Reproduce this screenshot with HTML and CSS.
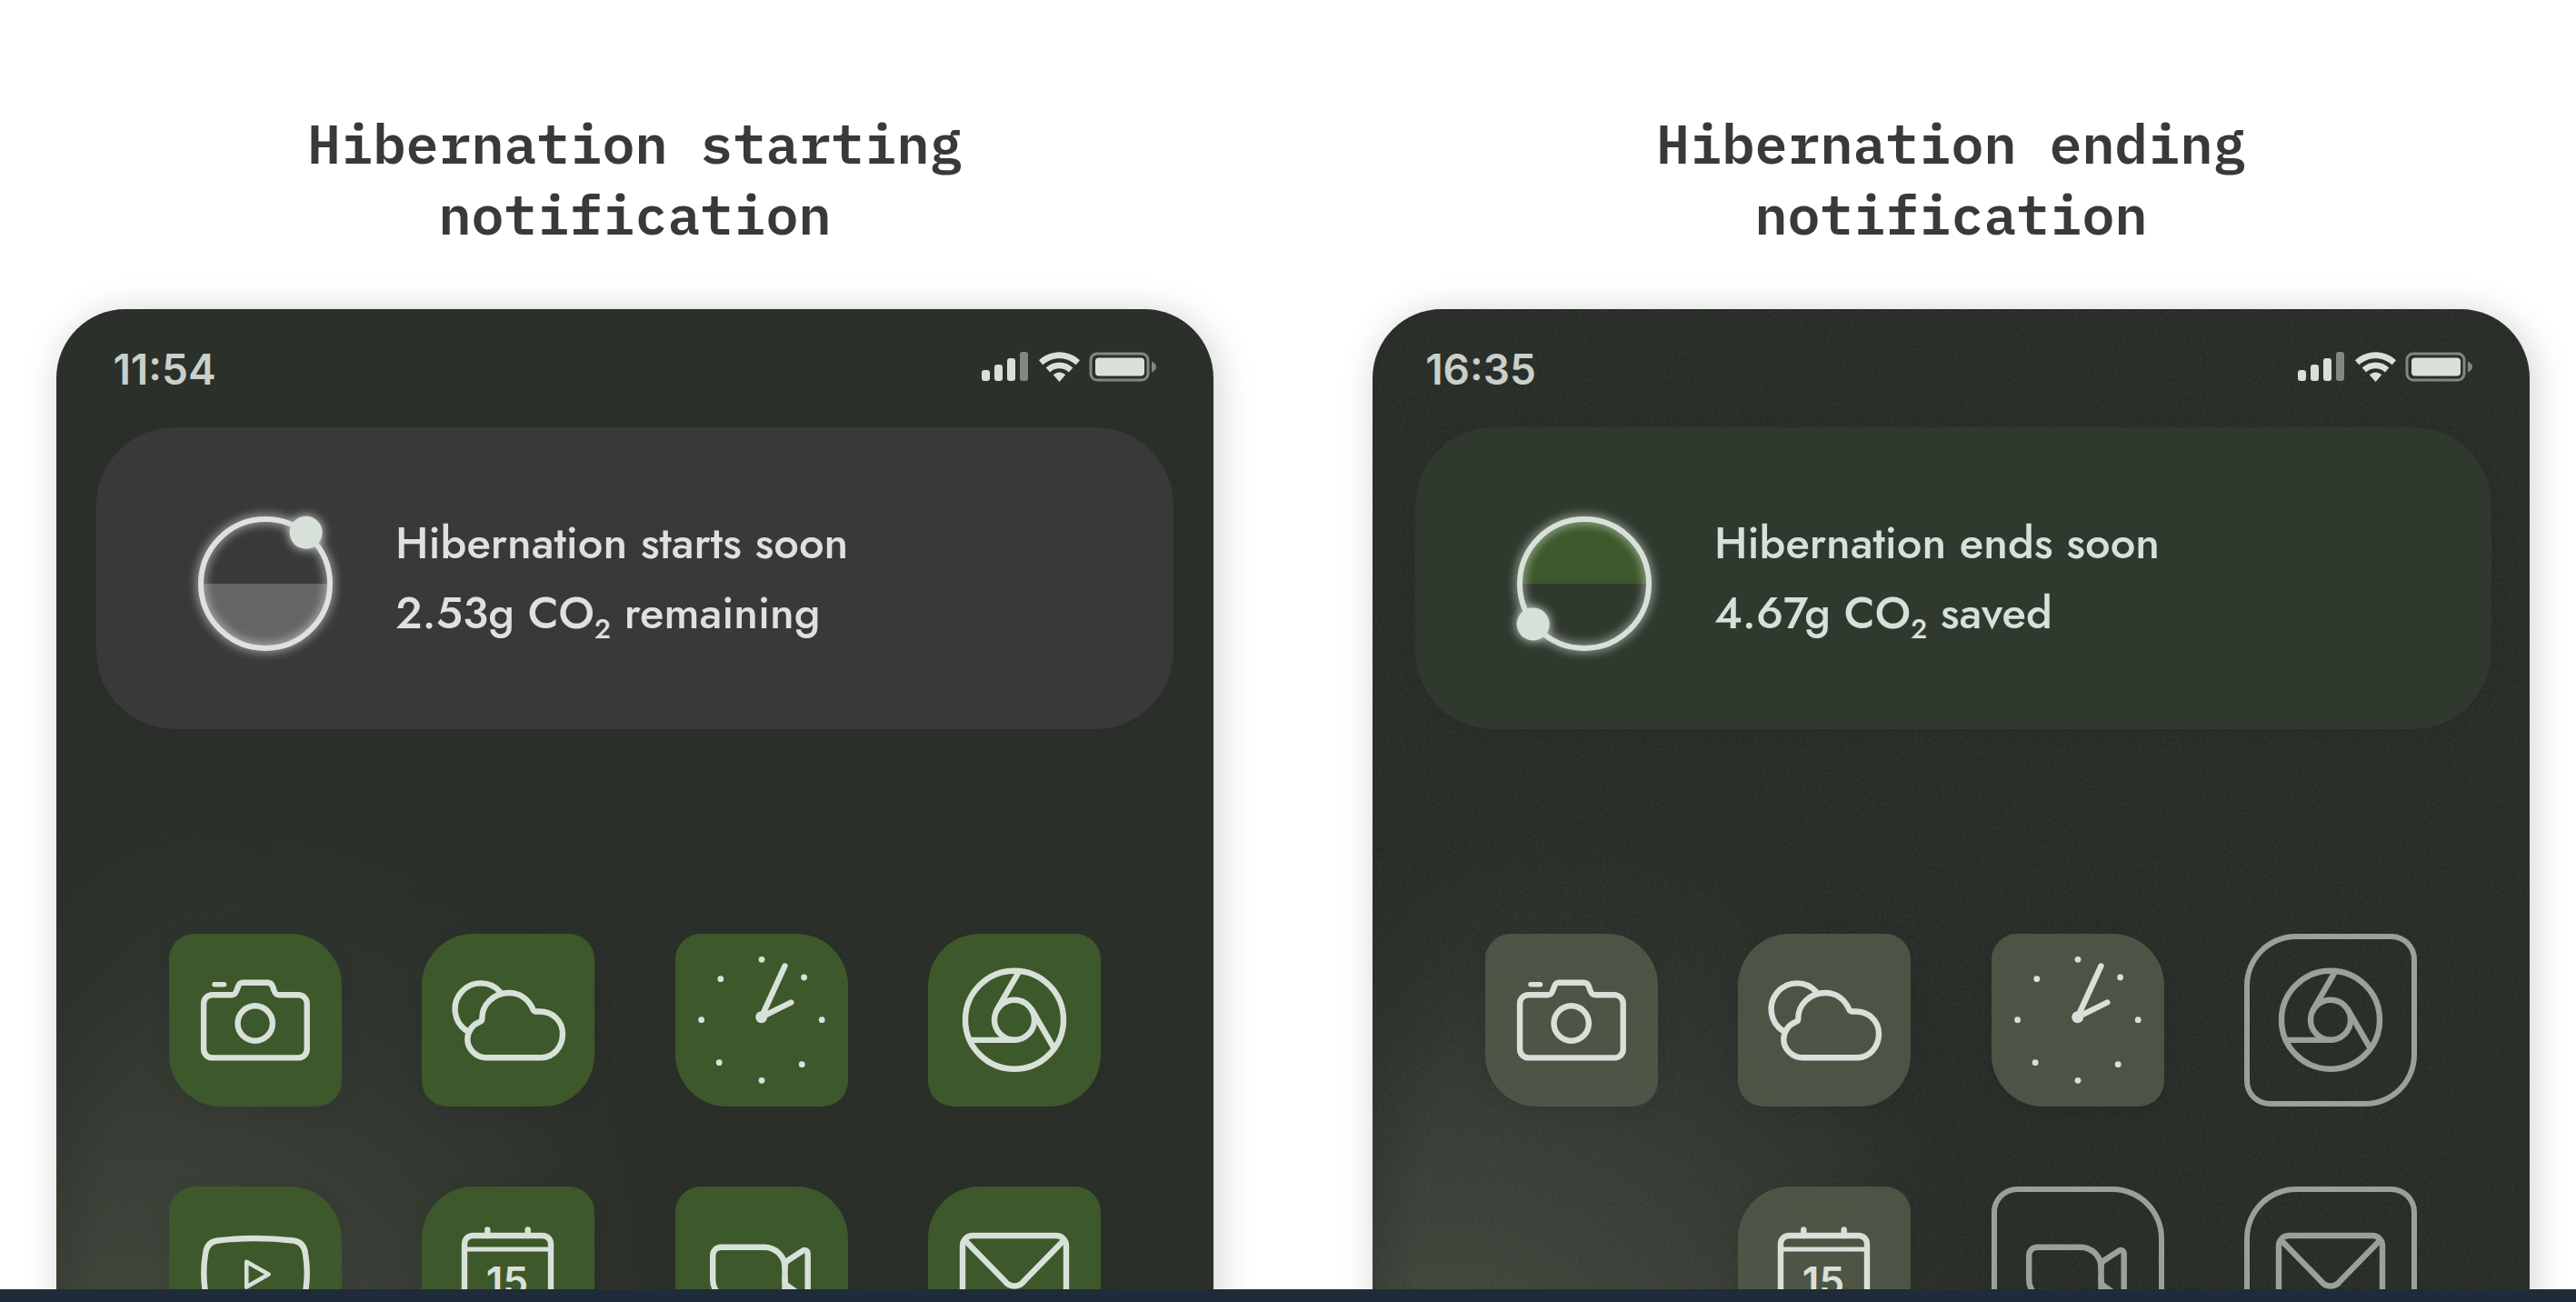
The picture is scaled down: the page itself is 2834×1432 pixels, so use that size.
FILE: index.html
```html
<!DOCTYPE html>
<html lang="en">
<head>
<meta charset="utf-8">
<meta name="viewport" content="width=device-width, initial-scale=1">
<title>Hibernation notifications</title>
<link rel="stylesheet" href="styles.css">
</head>
<body>
<svg class="sprite" aria-hidden="true">
  <symbol id="status" viewBox="0 0 192 34">
    <rect x="0" y="21" width="9" height="12" rx="3"/>
    <rect x="14" y="15" width="9" height="18" rx="3"/>
    <rect x="28" y="8" width="9" height="25" rx="3"/>
    <rect x="42" y="1" width="9" height="32" rx="3" opacity=".5"/>
    <path d="M85.500 1.300C94.300 1.300 102.300 4.800 108 10.300L103.700 15.300C99 10.900 92.500 8.200 85.500 8.200S72 10.900 67.300 15.300L63 10.300C68.700 4.800 76.700 1.300 85.500 1.300Z"/>
    <path d="M85.500 12.500C91.200 12.500 96.400 14.700 100.300 18.400L95.800 23.400C93 20.800 89.500 19.300 85.500 19.300S78 20.800 75.200 23.400L70.700 18.400C74.600 14.700 79.800 12.500 85.500 12.500Z"/>
    <path d="M85.500 23.400C88 23.400 90.400 24.500 92.200 26.200L85.500 34 78.800 26.200C80.600 24.500 83 23.400 85.500 23.400Z"/>
    <rect x="120" y="3" width="63" height="29" rx="7" fill="none" stroke="currentColor" stroke-width="3" opacity=".5"/>
    <rect x="125" y="7.500" width="54" height="20" rx="4"/>
    <path d="M187 11.500C190.400 13 192 15.200 192 17.500S190.400 22 187 23.500Z" opacity=".5"/>
  </symbol>
  <symbol id="camera" viewBox="0 0 190 190">
    <path d="M47.500 67.300H68.500C72 67.300 73 66 74.300 62.500L76 58C77.200 55 78 53.800 81 53.800H108.500C111.500 53.800 112.800 55 114 58L115.500 62.500C116.800 66 118 67.300 121.500 67.300H142.300a9.400 9.400 0 0 1 9.400 9.400V127a9.400 9.400 0 0 1-9.400 9.400H47.500a9.400 9.400 0 0 1-9.400-9.400V76.700a9.400 9.400 0 0 1 9.400-9.400Z"/>
    <circle cx="94.700" cy="98.500" r="19.200"/>
    <path d="M50 55.700H60.500" stroke-width="5.500"/>
  </symbol>
  <symbol id="weather" viewBox="0 0 190 190">
    <path d="M86.500 64A28.500 28.500 0 1 0 50 107" stroke-linecap="butt"/>
    <path d="M71 136.300H131.500C145 136.300 155 124 155 110C155 96 144 85.500 130 85.500H125.500C123.800 85.500 123.300 85 122.500 83.500C117.500 72 108 65 96 65C79 65 66 78 66.300 93.500C66.300 95.500 66 96 63.500 97C55.500 100 50.300 108 50.300 116C50.300 127 60 136.300 71 136.300Z"/>
  </symbol>
  <symbol id="clock" viewBox="0 0 190 190">
    <path d="M94.700 91.700L120.400 35.500M94.700 91.700L127.300 75.500"/>
    <g fill="currentColor" stroke="none">
      <circle cx="94.700" cy="91.700" r="6.500"/>
      <circle cx="95" cy="28.300" r="3.400"/><circle cx="141.600" cy="48" r="3.400"/>
      <circle cx="161.200" cy="94.700" r="3.400"/><circle cx="139.200" cy="143.700" r="3.400"/>
      <circle cx="95" cy="161.300" r="3.400"/><circle cx="48.200" cy="141.700" r="3.400"/>
      <circle cx="28.600" cy="94.700" r="3.400"/><circle cx="49.800" cy="49.700" r="3.400"/>
    </g>
  </symbol>
  <symbol id="browser" viewBox="0 0 190 190">
    <circle cx="95" cy="94.700" r="54"/>
    <circle cx="95" cy="94.700" r="22"/>
    <path d="M95 116.900H46"/>
    <path d="M95 116.900H46" transform="rotate(120 95 94.700)"/>
    <path d="M95 116.900H46" transform="rotate(240 95 94.700)"/>
  </symbol>
  <symbol id="player" viewBox="0 0 190 190">
    <path d="M53 59.500Q95 54.500 137 59.500C145 60.500 149 66 150 74Q153.500 95 150 116C149 124 145 130 137 131Q95 135 53 131C45 130 41 124 40 116Q36.500 95 40 74C41 66 45 60.500 53 59.500Z"/>
    <path d="M85.200 82.700L109.500 96.600L85.200 110.500Z" stroke-width="4.600"/>
  </symbol>
  <symbol id="calendar" viewBox="0 0 190 190">
    <rect x="47" y="54" width="95" height="84" rx="9"/>
    <path d="M47 69H142" stroke-width="5"/>
    <path d="M72.300 54V47.500M116.700 54V47.500"/>
  </symbol>
  <symbol id="video" viewBox="0 0 190 190">
    <path d="M50.200 66.700H98A22.500 22.500 0 0 1 120.500 89.200V115.700a9 9 0 0 1-9 9H63.700A22.500 22.500 0 0 1 41.200 102.200V75.700a9 9 0 0 1 9-9Z"/>
    <path d="M120.500 90c0-5 .5-6.500 3-8.500L139 71.300c3.500-2.500 6.700-1 6.700 3V117c0 4-3 5.500-6.700 3L123.500 109.500c-2.500-2-3-3.500-3-8.500"/>
  </symbol>
  <symbol id="mail" viewBox="0 0 190 190">
    <rect x="38" y="54" width="114" height="84" rx="11"/>
    <path d="M41.500 60L84 103.500C90 111.500 100 111.500 106 103.500L148.500 60"/>
  </symbol>
</svg>

<main class="stage">
  <section class="demo">
    <h2 class="demo-title">Hibernation starting notification</h2>
    <div class="phone">
      <header class="status-bar">
        <time class="clock-time">11:54</time>
        <svg class="status-icons" aria-hidden="true"><use href="#status"/></svg>
      </header>
      <article class="notice notice-start">
        <svg class="dial" viewBox="0 0 148 148" aria-hidden="true">
          <path class="dial-fill" d="M3 74A71 71 0 0 0 145 74Z"/>
          <circle class="dial-ring" cx="74" cy="74" r="71"/>
          <circle class="dial-knob" cx="118.600" cy="17.700" r="18"/>
        </svg>
        <p class="notice-text">Hibernation starts soon<br>2.53g CO<sub>2</sub> remaining</p>
      </article>
      <ul class="apps">
        <li><button class="app" aria-label="Camera"><svg><use href="#camera"/></svg></button></li>
        <li><button class="app app-flip" aria-label="Weather"><svg><use href="#weather"/></svg></button></li>
        <li><button class="app" aria-label="Clock"><svg><use href="#clock"/></svg></button></li>
        <li><button class="app app-flip" aria-label="Browser"><svg><use href="#browser"/></svg></button></li>
        <li><button class="app" aria-label="Videos"><svg><use href="#player"/></svg></button></li>
        <li><button class="app app-flip" aria-label="Calendar"><svg><use href="#calendar"/><text class="date" x="94" y="120" text-anchor="middle">15</text></svg></button></li>
        <li><button class="app" aria-label="Video call"><svg><use href="#video"/></svg></button></li>
        <li><button class="app app-flip" aria-label="Mail"><svg><use href="#mail"/></svg></button></li>
      </ul>
    </div>
  </section>

  <section class="demo">
    <h2 class="demo-title">Hibernation ending notification</h2>
    <div class="phone phone-asleep">
      <svg class="grain" aria-hidden="true">
        <filter id="noise" x="0" y="0" width="100%" height="100%">
          <feTurbulence type="fractalNoise" baseFrequency=".3" numOctaves="2" seed="4"/>
          <feColorMatrix values="0 0 0 0 .5  0 0 0 0 .5  0 0 0 0 .5  1.600 0 0 0 -.5"/>
        </filter>
        <rect width="100%" height="100%" filter="url(#noise)"/>
      </svg>
      <header class="status-bar">
        <time class="clock-time">16:35</time>
        <svg class="status-icons" aria-hidden="true"><use href="#status"/></svg>
      </header>
      <article class="notice notice-end">
        <svg class="dial" viewBox="0 0 148 148" aria-hidden="true">
          <path class="dial-fill" d="M3 74A71 71 0 0 1 145 74Z"/>
          <circle class="dial-ring" cx="74" cy="74" r="71"/>
          <circle class="dial-knob" cx="17.700" cy="118.400" r="18"/>
        </svg>
        <p class="notice-text">Hibernation ends soon<br>4.67g CO<sub>2</sub> saved</p>
      </article>
      <ul class="apps">
        <li><button class="app" aria-label="Camera"><svg><use href="#camera"/></svg></button></li>
        <li><button class="app app-flip" aria-label="Weather"><svg><use href="#weather"/></svg></button></li>
        <li><button class="app" aria-label="Clock"><svg><use href="#clock"/></svg></button></li>
        <li><button class="app app-flip app-off" aria-label="Browser"><svg><use href="#browser"/></svg></button></li>
        <li></li>
        <li><button class="app app-flip" aria-label="Calendar"><svg><use href="#calendar"/><text class="date" x="94" y="120" text-anchor="middle">15</text></svg></button></li>
        <li><button class="app app-off" aria-label="Video call"><svg><use href="#video"/></svg></button></li>
        <li><button class="app app-flip app-off" aria-label="Mail"><svg><use href="#mail"/></svg></button></li>
      </ul>
    </div>
  </section>
</main>
<footer class="base"></footer>
</body>
</html>
```
FILE: styles.css
```css
:root {
  --mint: #d8e1d9;
  --leaf: #3d582a;
  --ink: #393939;
  --night: #2c302b;
}

* {
  box-sizing: border-box;
}

body {
  display: flex;
  flex-direction: column;
  height: 100vh;
  margin: 0;
  background: #fff;
  overflow: hidden;
}

.sprite {
  position: absolute;
  width: 0;
  height: 0;
}

.stage {
  display: grid;
  grid-template-columns: 1fr 1fr;
  gap: 175px;
  flex: 1;
  min-height: 0;
  padding: 119px 51px 0 62px;
  overflow: hidden;
}

.base {
  height: 14px;
  flex: none;
  background: #1f2b38;
}

.demo-title {
  max-width: 860px;
  margin: 0 auto 65px;
  color: var(--ink);
  font: 600 60px/78px "IBM Plex Mono", "Liberation Mono", monospace;
  text-align: center;
}

.phone {
  position: relative;
  padding-bottom: 124px;
  border-radius: 76px;
  background: var(--night);
  box-shadow: 4px 4px 40px rgb(0 0 0 / 18%);
  color: var(--mint);
}

/* dim hill of light rising from the bottom-left corner */
.phone::before {
  content: "";
  position: absolute;
  inset: 0;
  border-radius: inherit;
  background: radial-gradient(ellipse 740px 640px at 80px 1190px, #464e42 0, #3f453b 22%, rgb(58 63 55 / 90%) 45%, rgb(54 59 52 / 50%) 70%, rgb(50 55 48 / 0%) 100%);
  mask-image: radial-gradient(ellipse 310px 640px at 280px 1110px, #000 76%, transparent 122%);
}

.phone-asleep {
  --night: #292d28;
}

.grain {
  position: absolute;
  inset: 0;
  width: 100%;
  height: 100%;
  border-radius: 76px;
  opacity: .05;
}

.status-bar {
  position: relative;
  display: flex;
  align-items: center;
  justify-content: space-between;
  height: 130px;
  padding: 0 63px 4px 0;
}

.clock-time {
  width: 238px;
  padding-top: 6px;
  color: #c9d0c9;
  font: 600 46px/60px Inter, sans-serif;
  text-align: center;
}

.status-icons {
  width: 192px;
  height: 34px;
  fill: currentColor;
}

.notice {
  position: relative;
  display: flex;
  align-items: center;
  gap: 69px;
  height: 332px;
  margin: 0 44px;
  padding: 0 112px;
  border-radius: 86px;
  box-shadow: 0 4px 24px rgb(0 0 0 / 5%);
}

.notice-start {
  --glow: #e0e0e0;
  background: var(--ink);
  color: #e0e0e0;
}

.notice-end {
  --glow: #d8e1d9;
  margin: 0 42px 0 47px;
  background: #30392e;
}

.dial {
  flex: none;
  width: 148px;
  height: 148px;
  margin-top: 12px;
  overflow: visible;
}

.dial-ring {
  fill: none;
  stroke: var(--glow);
  stroke-width: 6;
  filter: drop-shadow(0 0 6px var(--glow));
}

.dial-knob {
  fill: var(--mint);
  filter: drop-shadow(0 0 6px var(--mint));
}

.notice-start .dial-fill {
  fill: #656565;
}

.notice-end .dial-fill {
  fill: var(--leaf);
}

.notice-text {
  margin: 0;
  font: 500 49px/77px Futura, Jost, Lato, sans-serif;
}

.notice-text sub {
  font-size: 30px;
  line-height: 0;
}

.apps {
  position: relative;
  display: grid;
  grid-template-columns: repeat(4, 190px);
  justify-content: space-between;
  row-gap: 88px;
  margin: 0;
  padding: 225px 124px 0;
  list-style: none;
}

.app {
  display: block;
  width: 190px;
  height: 190px;
  padding: 0;
  border: 0;
  border-radius: 28px 57px;
  background: var(--leaf);
  box-shadow: 0 4px 24px rgb(0 0 0 / 8%);
  color: inherit;
}

.app-flip {
  border-radius: 57px 28px;
}

.phone-asleep .app {
  background: rgb(80 89 72 / 90%);
}

.phone-asleep .app-off {
  background: none;
  box-shadow: inset 0 0 0 6px #9ba198;
  color: #9ba198;
}

.app svg {
  display: block;
  width: 190px;
  height: 190px;
  fill: none;
  stroke: currentColor;
  stroke-width: 6.4;
  stroke-linecap: round;
  stroke-linejoin: round;
}

.app .date {
  fill: currentColor;
  stroke: none;
  font: 600 44px/48px Inter, sans-serif;
}
```
